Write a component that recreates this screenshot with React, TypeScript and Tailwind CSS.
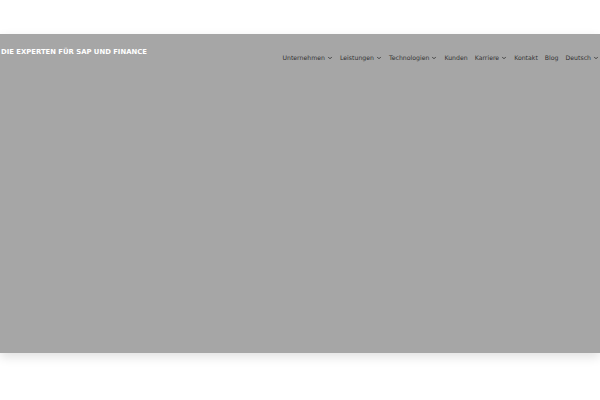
import { ChevronDown } from "lucide-react";

const navItems = [
  { label: "Unternehmen", dropdown: true },
  { label: "Leistungen", dropdown: true },
  { label: "Technologien", dropdown: true },
  { label: "Kunden", dropdown: false },
  { label: "Karriere", dropdown: true },
  { label: "Kontakt", dropdown: false },
  { label: "Blog", dropdown: false },
  { label: "Deutsch", dropdown: true },
];

export default function App() {
  return (
    <div className="h-[400px] w-[600px] bg-white pt-[34px] font-['DejaVu_Sans',sans-serif]">
      <header className="h-[319px] bg-[#a6a6a6] shadow-[0_4px_10px_rgba(0,0,0,0.12)]">
        <div className="flex items-start justify-between">
          <div className="pl-[1px] pt-[15px] text-[6.85px] font-bold leading-none text-white">
            DIE EXPERTEN FÜR SAP UND FINANCE
          </div>
          <nav className="flex items-center gap-[7px] pr-[1px] pt-[21px]">
            {navItems.map((item) => (
              <a key={item.label} className="flex items-center gap-[2px] text-[6.2px] leading-none text-[#333333]">
                {item.label}
                {item.dropdown && <ChevronDown className="h-[6px] w-[6px]" strokeWidth={3.5} />}
              </a>
            ))}
          </nav>
        </div>
      </header>
    </div>
  );
}
